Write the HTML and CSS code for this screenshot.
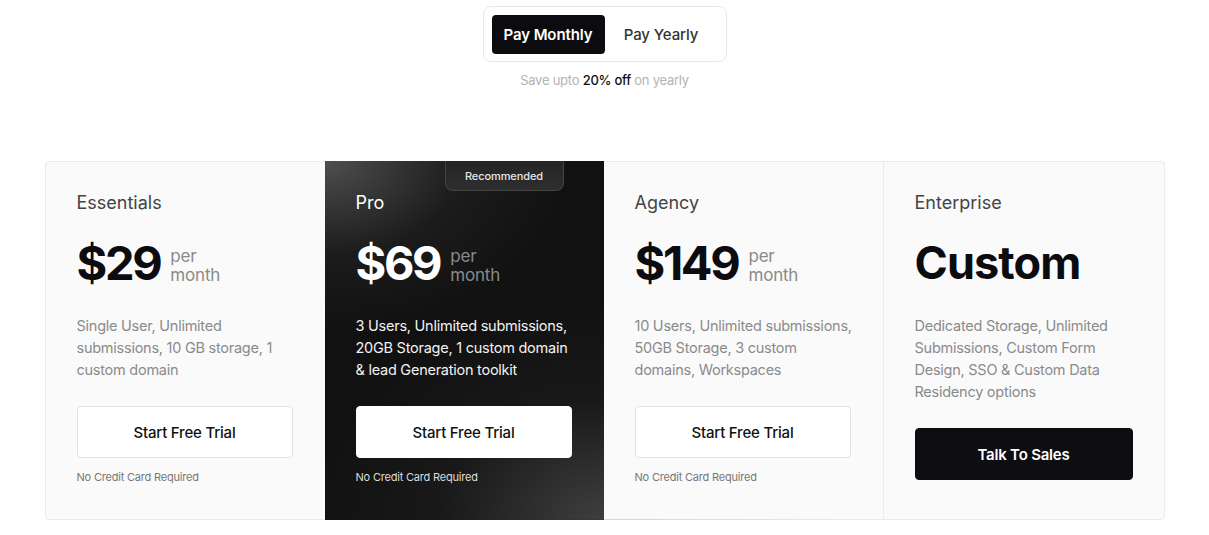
FILE: index.html
```html
<!DOCTYPE html>
<html>
<head>
<meta charset="utf-8">
<link rel="stylesheet" href="styles.css">
</head>
<body>
<div class="page">
  <div class="toggle">
    <button class="tbtn active">Pay Monthly</button>
    <button class="tbtn">Pay Yearly</button>
  </div>
  <p class="save">Save upto <b>20% off</b> on yearly</p>

  <div class="plans">
    <div class="plan">
      <h3 class="name">Essentials</h3>
      <div class="price-row"><span class="price">$29</span><span class="per">per<br>month</span></div>
      <p class="desc">Single User, Unlimited submissions, 10 GB storage, 1 custom domain</p>
      <a class="btn">Start Free Trial</a>
      <p class="note">No Credit Card Required</p>
    </div>
    <div class="plan pro">
      <div class="badge">Recommended</div>
      <h3 class="name">Pro</h3>
      <div class="price-row"><span class="price">$69</span><span class="per">per<br>month</span></div>
      <p class="desc">3 Users, Unlimited submissions, 20GB Storage, 1 custom domain &amp; lead Generation toolkit</p>
      <a class="btn">Start Free Trial</a>
      <p class="note">No Credit Card Required</p>
    </div>
    <div class="plan">
      <h3 class="name">Agency</h3>
      <div class="price-row"><span class="price">$149</span><span class="per">per<br>month</span></div>
      <p class="desc">10 Users, Unlimited submissions, 50GB Storage, 3 custom domains, Workspaces</p>
      <a class="btn">Start Free Trial</a>
      <p class="note">No Credit Card Required</p>
    </div>
    <div class="plan">
      <h3 class="name">Enterprise</h3>
      <div class="price-row"><span class="price custom">Custom</span></div>
      <p class="desc">Dedicated Storage, Unlimited Submissions, Custom Form Design, SSO &amp; Custom Data Residency options</p>
      <a class="btn dark">Talk To Sales</a>
    </div>
  </div>
</div>
</body>
</html>
```
FILE: styles.css
```css
* { box-sizing: border-box; }
html, body { margin: 0; padding: 0; background: #fff; }
body {
  font-family: Inter, "Noto Sans", "Liberation Sans", sans-serif;
  color: #111;
  -webkit-font-smoothing: antialiased;
}
.page {
  display: flex;
  flex-direction: column;
  align-items: center;
  padding-top: 6px;
}
.toggle {
  display: flex;
  align-items: center;
  width: 244px;
  height: 56px;
  padding: 0 8px;
  border: 1px solid #e8e8e8;
  border-radius: 8px;
  background: #fff;
}
.tbtn {
  font-family: inherit;
  font-size: 15px;
  font-weight: 500;
  letter-spacing: -0.1px;
  border: none;
  background: transparent;
  color: #333;
  height: 39px;
  border-radius: 4px;
  padding: 0;
  cursor: pointer;
}
.tbtn.active {
  width: 113px;
  background: #0c0c10;
  color: #fff;
  font-weight: 600;
}
.tbtn:not(.active) { flex: 1; }
.save {
  margin: 10px 0 0;
  font-size: 13px;
  line-height: 16px;
  letter-spacing: -0.25px;
  color: #b3b3b3;
}
.save b { color: #111; font-weight: 500; }

.plans {
  position: relative;
  margin-top: 73px;
  width: 1120px;
  display: grid;
  grid-template-columns: 279px 279px 279px 1fr;
  border: 1px solid #ebebeb;
  border-radius: 4px;
  background: #fafafa;
}
.plans::after {
  content: "";
  position: absolute;
  left: 340px;
  right: 300px;
  bottom: -20px;
  height: 20px;
  background: radial-gradient(ellipse at 50% 0%, rgba(0,0,0,0.09), rgba(0,0,0,0) 70%);
  pointer-events: none;
}
.plan {
  position: relative;
  display: flex;
  flex-direction: column;
  align-items: flex-start;
  padding: 29px 20px 34px 31px;
  border-left: 1px solid #ebebeb;
}
.plan:first-child { border-left: none; }
.name {
  margin: 0;
  font-size: 18px;
  line-height: 24px;
  font-weight: 400;
  color: #444;
}
.price-row {
  margin-top: 20px;
  height: 56px;
  display: flex;
  align-items: center;
  gap: 10px;
}
.price {
  font-size: 47px;
  line-height: 56px;
  font-weight: 700;
  letter-spacing: -0.05em;
  color: #0c0c10;
}
.price.custom { font-size: 45px; letter-spacing: -0.02em; }
.per {
  font-size: 17px;
  line-height: 19px;
  letter-spacing: -0.2px;
  color: #8a8a8a;
  padding-top: 6px;
}
.desc {
  margin: 24px 0 0;
  font-size: 14.5px;
  line-height: 22px;
  letter-spacing: -0.25px;
  color: #8a8a8a;
  max-width: 218px;
}
.btn {
  margin-top: 25px;
  width: 216px;
  height: 52px;
  display: flex;
  align-items: center;
  justify-content: center;
  background: #fff;
  border: 1px solid #e2e2e2;
  border-radius: 4px;
  font-size: 15px;
  font-weight: 500;
  letter-spacing: -0.2px;
  color: #111;
}
.btn.dark {
  width: 218px;
  background: #0d0d12;
  border-color: #0d0d12;
  color: #fff;
  font-weight: 600;
}
.note {
  margin: 11px 0 0;
  font-size: 11px;
  line-height: 16px;
  letter-spacing: -0.2px;
  color: #777;
}

.pro {
  border-left: none;
  background:
    radial-gradient(ellipse 250px 170px at 0% 0%, rgba(120,120,120,0.6), rgba(60,60,60,0.25) 55%, rgba(17,17,17,0) 100%),
    radial-gradient(ellipse 300px 220px at 100% 100%, rgba(100,100,100,0.55), rgba(55,55,55,0.2) 55%, rgba(17,17,17,0) 100%),
    #111;
  margin: -1px 0;
  padding-top: 30px;
  padding-bottom: 35px;
}
.pro + .plan { border-left: none; }
.pro .name { color: #fff; }
.pro .price { color: #fff; }
.pro .per { color: #8a8a8a; }
.pro .desc { color: #f2f2f2; }
.pro .btn { border-color: #fff; }
.pro .note { color: #ddd; }
.badge {
  position: absolute;
  top: 0;
  left: 120px;
  width: 119px;
  height: 30px;
  display: flex;
  align-items: center;
  justify-content: center;
  font-size: 11px;
  font-weight: 500;
  letter-spacing: -0.1px;
  color: #e6e6e6;
  background: linear-gradient(180deg, #252525, #2e2e2e);
  border: 1px solid #444;
  border-top: none;
  border-radius: 0 0 8px 8px;
}
```
